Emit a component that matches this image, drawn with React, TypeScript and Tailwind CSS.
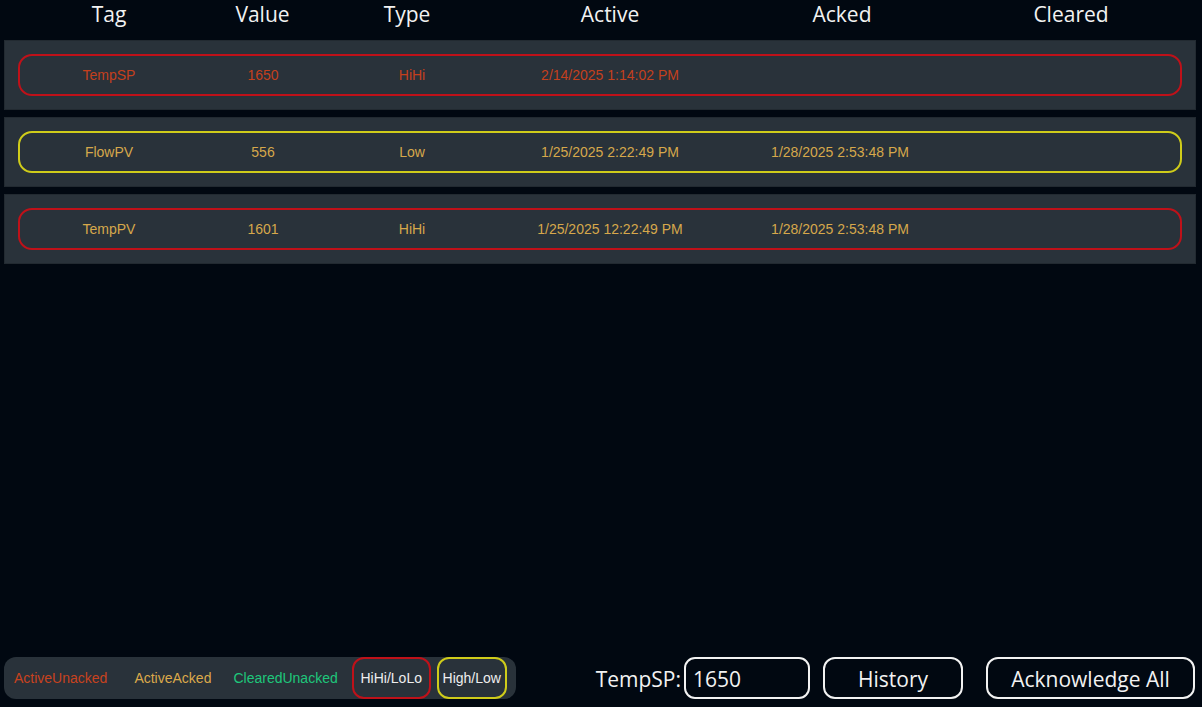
import React from "react";

type Row = {
  tag: string;
  value: string;
  type: string;
  active: string;
  acked: string;
  cleared: string;
  border: "red" | "yellow";
  text: "red" | "yellow";
};

const rows: Row[] = [
  { tag: "TempSP", value: "1650", type: "HiHi", active: "2/14/2025 1:14:02 PM", acked: "", cleared: "", border: "red", text: "red" },
  { tag: "FlowPV", value: "556", type: "Low", active: "1/25/2025 2:22:49 PM", acked: "1/28/2025 2:53:48 PM", cleared: "", border: "yellow", text: "yellow" },
  { tag: "TempPV", value: "1601", type: "HiHi", active: "1/25/2025 12:22:49 PM", acked: "1/28/2025 2:53:48 PM", cleared: "", border: "red", text: "yellow" },
];

const headFont = { fontFamily: '"Open Sans", "Noto Sans", sans-serif' };
const armFont = { fontFamily: '"Liberation Sans", Arial, sans-serif' };

export default function App() {
  return (
    <div className="h-[707px] w-[1202px] bg-[#010811] flex flex-col overflow-hidden">
      <div
        className="grid grid-cols-[218px_89px_200px_206px_258px_200px] h-[40px] text-[21px] leading-[28px] text-[#f2f2f2]"
        style={headFont}
      >
        <div className="text-center">Tag</div>
        <div className="text-center">Value</div>
        <div className="text-center">Type</div>
        <div className="text-center">Active</div>
        <div className="text-center">Acked</div>
        <div className="text-center">Cleared</div>
      </div>

      <div className="flex flex-col gap-[7px] px-[4px] pr-[6px]">
        {rows.map((r, i) => (
          <div key={i} className="h-[70px] bg-[#29323a] border border-[#222a31] p-[13px]">
            <div
              className={`h-[42px] rounded-[14px] border-2 grid grid-cols-[178px_130px_168px_228px_232px_1fr] items-center text-[14px] ${
                r.border === "red" ? "border-[#bf1119]" : "border-[#cfcc1a]"
              } ${r.text === "red" ? "text-[#c4401d]" : "text-[#d6a84b]"}`}
              style={armFont}
            >
              <div className="text-center">{r.tag}</div>
              <div className="text-center">{r.value}</div>
              <div className="text-center">{r.type}</div>
              <div className="text-center whitespace-nowrap">{r.active}</div>
              <div className="text-center whitespace-nowrap">{r.acked}</div>
              <div className="text-center whitespace-nowrap">{r.cleared}</div>
            </div>
          </div>
        ))}
      </div>

      <div className="flex-1" />

      <div className="flex items-center justify-between pl-[4px] pr-[7px] pb-[8px]">
        <div
          className="h-[42px] w-[512px] rounded-[12px] bg-[#29323a] flex items-center text-[14px]"
          style={armFont}
        >
          <span className="ml-[10px] text-[#c8421e]">ActiveUnacked</span>
          <span className="ml-[27px] text-[#dca94a]">ActiveAcked</span>
          <span className="ml-[22px] text-[#1ec77a]">ClearedUnacked</span>
          <span className="ml-[14px] h-[42px] w-[79px] rounded-[12px] border-2 border-[#bf1119] flex items-center justify-center text-[#eeeeee]">
            HiHi/LoLo
          </span>
          <span className="ml-[6px] h-[42px] w-[70px] rounded-[12px] border-2 border-[#cfcc1a] flex items-center justify-center text-[#eeeeee]">
            High/Low
          </span>
        </div>

        <div className="flex items-center text-[21px] text-[#f2f2f2]" style={headFont}>
          <span className="mr-[3px] pt-[3px]">TempSP:</span>
          <div className="h-[42px] w-[126px] rounded-[11px] border-2 border-[#f2f2f2] flex items-center pl-[7px] pt-[3px]">
            1650
          </div>
          <button className="ml-[13px] h-[42px] w-[140px] rounded-[12px] border-2 border-[#f2f2f2] flex items-center justify-center pt-[3px]">
            History
          </button>
          <button className="ml-[23px] h-[42px] w-[209px] rounded-[12px] border-2 border-[#f2f2f2] flex items-center justify-center pt-[3px]">
            Acknowledge All
          </button>
        </div>
      </div>
    </div>
  );
}
